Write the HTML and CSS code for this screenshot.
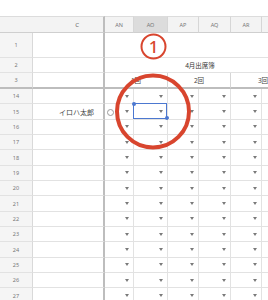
FILE: index.html
```html
<!DOCTYPE html>
<html lang="ja">
<head>
  <meta charset="UTF-8" />
  <meta name="viewport" content="width=device-width, initial-scale=1.0"/>
  <title>出席簿</title>
  <link rel="stylesheet" href="styles.css">
</head>
<body>
<div class="page">
  <div class="top-space"></div>

  <div class="sheet">
    <!-- column letters -->
    <div class="corner">C</div>
    <div class="colhead">AN</div>
    <div class="colhead is-active">AO</div>
    <div class="colhead">AP</div>
    <div class="colhead">AQ</div>
    <div class="colhead">AR</div>
    <div class="colhead"></div>

    <!-- frozen rows -->
    <div class="rownum">1</div>
    <div class="cell name"></div>
    <div class="cell wide"></div>

    <div class="rownum">2</div>
    <div class="cell name"></div>
    <div class="cell wide title">4月出席簿</div>

    <div class="rownum frozen">3</div>
    <div class="cell name frozen"></div>
    <div class="cell pair frozen">1回</div>
    <div class="cell pair frozen">2回</div>
    <div class="cell pair frozen">3回</div>

    <!-- attendance rows -->
    <div class="rownum">14</div>
    <div class="cell name"></div>
    <div class="cell dd"></div><div class="cell dd"></div><div class="cell dd"></div><div class="cell dd"></div><div class="cell dd"></div><div class="cell dd"></div>

    <div class="rownum">15</div>
    <div class="cell name">イロハ太郎</div>
    <div class="cell dd"><span class="cursor"></span></div>
    <div class="cell dd is-selected"><span class="sel"></span></div>
    <div class="cell dd"></div><div class="cell dd"></div><div class="cell dd"></div><div class="cell dd"></div>

    <div class="rownum">16</div>
    <div class="cell name"></div>
    <div class="cell dd"></div><div class="cell dd"></div><div class="cell dd"></div><div class="cell dd"></div><div class="cell dd"></div><div class="cell dd"></div>

    <div class="rownum">17</div>
    <div class="cell name"></div>
    <div class="cell dd"></div><div class="cell dd"></div><div class="cell dd"></div><div class="cell dd"></div><div class="cell dd"></div><div class="cell dd"></div>

    <div class="rownum">18</div>
    <div class="cell name"></div>
    <div class="cell dd"></div><div class="cell dd"></div><div class="cell dd"></div><div class="cell dd"></div><div class="cell dd"></div><div class="cell dd"></div>

    <div class="rownum">19</div>
    <div class="cell name"></div>
    <div class="cell dd"></div><div class="cell dd"></div><div class="cell dd"></div><div class="cell dd"></div><div class="cell dd"></div><div class="cell dd"></div>

    <div class="rownum">20</div>
    <div class="cell name"></div>
    <div class="cell dd"></div><div class="cell dd"></div><div class="cell dd"></div><div class="cell dd"></div><div class="cell dd"></div><div class="cell dd"></div>

    <div class="rownum">21</div>
    <div class="cell name"></div>
    <div class="cell dd"></div><div class="cell dd"></div><div class="cell dd"></div><div class="cell dd"></div><div class="cell dd"></div><div class="cell dd"></div>

    <div class="rownum">22</div>
    <div class="cell name"></div>
    <div class="cell dd"></div><div class="cell dd"></div><div class="cell dd"></div><div class="cell dd"></div><div class="cell dd"></div><div class="cell dd"></div>

    <div class="rownum">23</div>
    <div class="cell name"></div>
    <div class="cell dd"></div><div class="cell dd"></div><div class="cell dd"></div><div class="cell dd"></div><div class="cell dd"></div><div class="cell dd"></div>

    <div class="rownum">24</div>
    <div class="cell name"></div>
    <div class="cell dd"></div><div class="cell dd"></div><div class="cell dd"></div><div class="cell dd"></div><div class="cell dd"></div><div class="cell dd"></div>

    <div class="rownum">25</div>
    <div class="cell name"></div>
    <div class="cell dd"></div><div class="cell dd"></div><div class="cell dd"></div><div class="cell dd"></div><div class="cell dd"></div><div class="cell dd"></div>

    <div class="rownum">26</div>
    <div class="cell name"></div>
    <div class="cell dd"></div><div class="cell dd"></div><div class="cell dd"></div><div class="cell dd"></div><div class="cell dd"></div><div class="cell dd"></div>

    <div class="rownum">27</div>
    <div class="cell name"></div>
    <div class="cell dd"></div><div class="cell dd"></div><div class="cell dd"></div><div class="cell dd"></div><div class="cell dd"></div><div class="cell dd"></div>
  </div>

  <!-- hand-drawn annotation over the sheet -->
  <svg class="marks" width="268" height="300" viewBox="0 0 268 300">
    <circle cx="153.5" cy="46.5" r="12" fill="none" stroke="#d8452e" stroke-width="2"/>
    <text x="153.5" y="52.5" text-anchor="middle" class="mark-num">1</text>
    <circle cx="153" cy="111.5" r="36" fill="none" stroke="#d8452e" stroke-width="4"/>
  </svg>
</div>
</body>
</html>
```

FILE: styles.css
```css
html, body {
  margin: 0;
  overflow: hidden;
}

body {
  font-family: "Noto Sans", "Noto Sans CJK JP", sans-serif;
  background: white;
  width: 268px;
  height: 300px;
}

.page {
  position: relative;
  width: 268px;
  height: 300px;
  overflow: hidden;
}

.top-space {
  height: 16px;
}

.sheet {
  display: grid;
  width: 296px;
  grid-template-columns: 33px 72px 29px 34px 31px 32px 31px 34px;
  grid-template-rows: 17px 25px 15px 16px repeat(14, 15.35px);
  font-size: 6px;
  color: #666;
}

.sheet > div {
  box-sizing: border-box;
  border-right: 1px solid #e2e2e2;
  border-bottom: 1px solid #e2e2e2;
  min-width: 0;
}

.corner {
  grid-column: span 2;
  background: #f3f3f3;
  text-align: right;
  padding-right: 24px;
  line-height: 16px;
  border-right: 2px solid #bdbdbd !important;
  border-bottom: 1px solid #cfcfcf !important;
  border-top: 1px solid #dcdcdc;
}

.colhead {
  background: #f3f3f3;
  text-align: center;
  line-height: 16px;
  font-size: 5.5px;
  color: #777;
  border-right: 1px solid #d6d6d6 !important;
  border-bottom: 1px solid #cfcfcf !important;
  border-top: 1px solid #dcdcdc;
}

.colhead.is-active {
  background: #dcdcdc;
}

.rownum {
  background: #f5f5f5;
  display: flex;
  align-items: center;
  justify-content: center;
  font-size: 5.5px;
  color: #777;
  border-right: 1px solid #d9d9d9 !important;
}

.cell {
  display: flex;
  align-items: center;
  position: relative;
}

.cell.name {
  border-right: 2px solid #bdbdbd;
  justify-content: flex-end;
  padding-right: 9px;
  font-size: 7px;
  color: #444;
}

.cell.wide {
  grid-column: span 6;
  justify-content: center;
}

.cell.title {
  font-size: 6.5px;
  color: #333;
}

.cell.pair {
  grid-column: span 2;
  justify-content: center;
  font-size: 6.5px;
  color: #444;
  border-right: 1px solid #d6d6d6;
}

.sheet > .frozen {
  border-bottom: 2px solid #bdbdbd;
}

.cell.dd {
  justify-content: flex-end;
  padding-right: 4px;
}

.cell.dd::after {
  content: "";
  border-left: 2.5px solid transparent;
  border-right: 2.5px solid transparent;
  border-top: 3px solid #7a7a7a;
}

.cursor {
  position: absolute;
  left: 2px;
  top: 5px;
  width: 5px;
  height: 5px;
  border: 1px solid #9a9a9a;
  border-radius: 50%;
  background: white;
}

.sel {
  position: absolute;
  left: -1px;
  top: -1px;
  right: 0;
  bottom: 0;
  border: 1px solid #4c78d0;
}

.sel::before,
.sel::after {
  content: "";
  position: absolute;
  width: 4px;
  height: 4px;
  border-radius: 50%;
  background: #4c78d0;
}

.sel::before {
  left: -2.5px;
  top: -2.5px;
}

.sel::after {
  right: -2.5px;
  bottom: -2.5px;
}

.marks {
  position: absolute;
  left: 0;
  top: 0;
  pointer-events: none;
}

.mark-num {
  font-family: "Noto Sans", sans-serif;
  font-size: 17px;
  font-weight: 500;
  fill: #d8452e;
}
```
